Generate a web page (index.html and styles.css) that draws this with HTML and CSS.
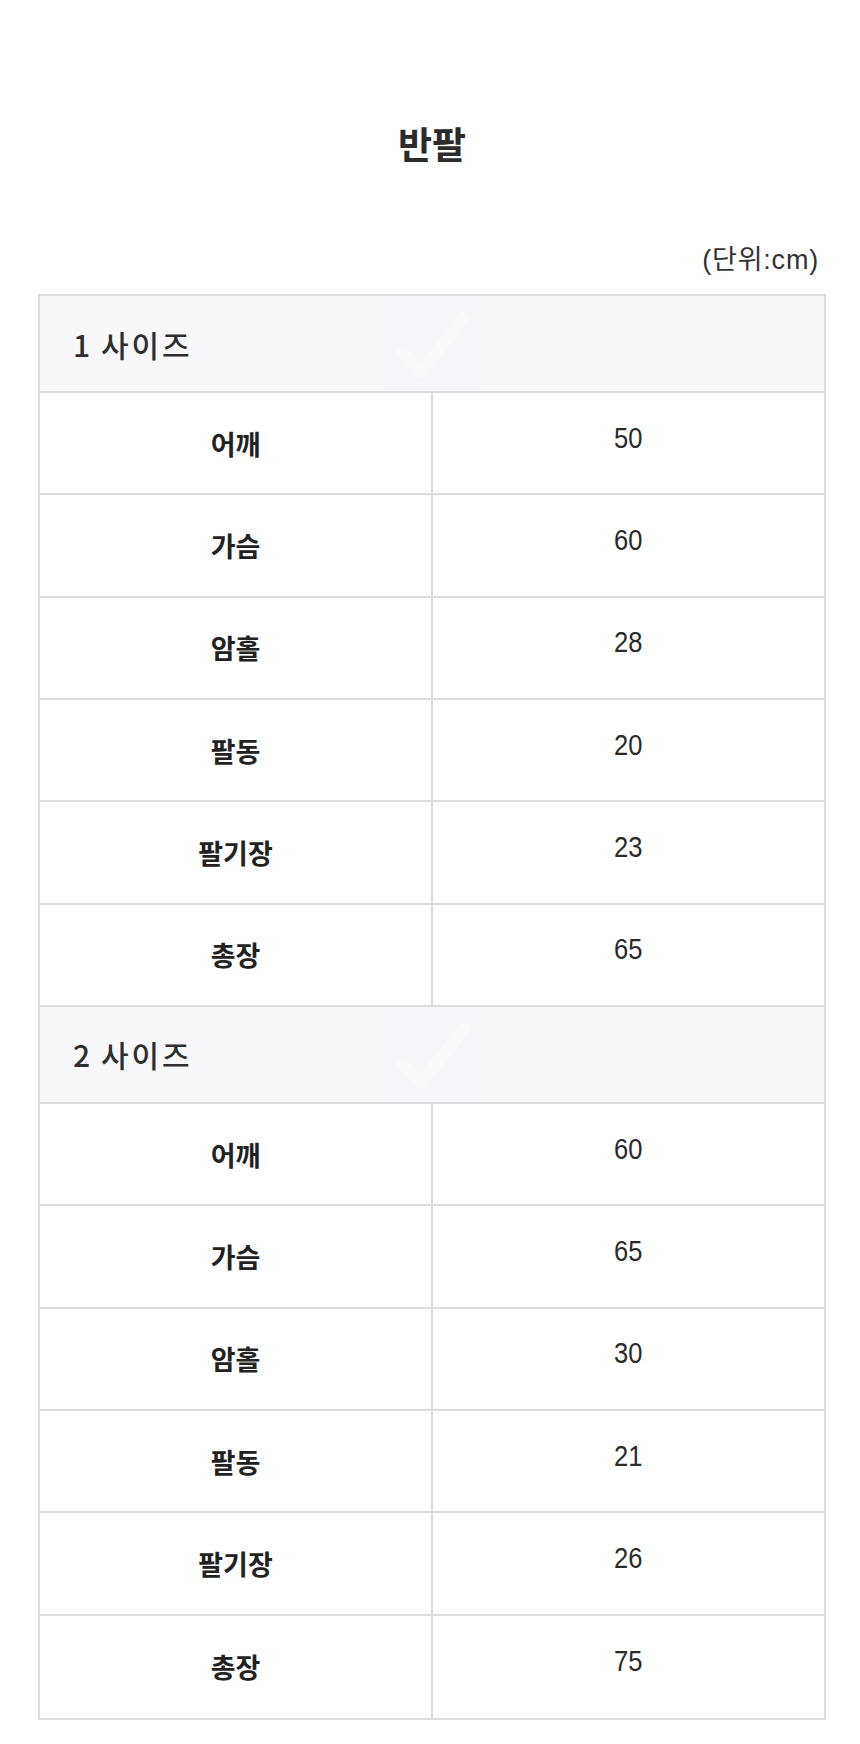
FILE: index.html
```html
<!DOCTYPE html>
<html lang="ko">
<head>
<meta charset="utf-8">
<title>반팔</title>
<link rel="stylesheet" href="styles.css">
</head>
<body>
<main class="page">
  <h1 class="title">반팔</h1>
  <p class="unit">(단위:cm)</p>
  <div class="size-table">
    <section class="size-section">
      <div class="size-head">
        <span class="head-text">1 사이즈</span>
        <span class="watermark" aria-hidden="true">
          <svg viewBox="0 0 97 97" width="97" height="97"><path d="M18 57 L37 76 L80 22" fill="none" stroke="#ffffff" stroke-width="12" stroke-linejoin="round" stroke-linecap="round" opacity="0.4"/></svg>
        </span>
      </div>
      <div class="row"><div class="cell label">어깨</div><div class="cell value"><span class="num">50</span></div></div>
      <div class="row"><div class="cell label">가슴</div><div class="cell value"><span class="num">60</span></div></div>
      <div class="row"><div class="cell label">암홀</div><div class="cell value"><span class="num">28</span></div></div>
      <div class="row"><div class="cell label">팔동</div><div class="cell value"><span class="num">20</span></div></div>
      <div class="row"><div class="cell label">팔기장</div><div class="cell value"><span class="num">23</span></div></div>
      <div class="row"><div class="cell label">총장</div><div class="cell value"><span class="num">65</span></div></div>
    </section>
    <section class="size-section">
      <div class="size-head">
        <span class="head-text">2 사이즈</span>
        <span class="watermark" aria-hidden="true">
          <svg viewBox="0 0 97 97" width="97" height="97"><path d="M18 57 L37 76 L80 22" fill="none" stroke="#ffffff" stroke-width="12" stroke-linejoin="round" stroke-linecap="round" opacity="0.4"/></svg>
        </span>
      </div>
      <div class="row"><div class="cell label">어깨</div><div class="cell value"><span class="num">60</span></div></div>
      <div class="row"><div class="cell label">가슴</div><div class="cell value"><span class="num">65</span></div></div>
      <div class="row"><div class="cell label">암홀</div><div class="cell value"><span class="num">30</span></div></div>
      <div class="row"><div class="cell label">팔동</div><div class="cell value"><span class="num">21</span></div></div>
      <div class="row"><div class="cell label">팔기장</div><div class="cell value"><span class="num">26</span></div></div>
      <div class="row"><div class="cell label">총장</div><div class="cell value"><span class="num">75</span></div></div>
    </section>
  </div>
</main>
</body>
</html>
```
FILE: styles.css
```css
* { box-sizing: border-box; }
html, body { margin: 0; padding: 0; background: #ffffff; }
body {
  font-family: "Noto Sans CJK KR", "Noto Sans", sans-serif;
  color: #333333;
}
.page {
  width: 860px;
  padding: 123px 34px 26px 38px;
}
.title {
  margin: 0;
  height: 40px;
  line-height: 40px;
  text-align: center;
  font-size: 37px;
  font-weight: 700;
  color: #2b2b2b;
}
.unit {
  margin: 84px 0 0 0;
  height: 26px;
  line-height: 26px;
  text-align: right;
  font-family: "Liberation Sans", "Noto Sans CJK KR", sans-serif;
  font-size: 27px;
  letter-spacing: 0.8px;
  color: #333333;
  padding-right: 7px;
}
.size-table {
  margin-top: 21px;
  border: 2px solid #dcdcdf;
}
.size-head {
  position: relative;
  height: 97px;
  display: flex;
  align-items: center;
  padding-left: 33px;
  background: #f8f8fb;
  border-bottom: 2px solid #dcdcdf;
}
.head-text {
  font-size: 30px;
  font-weight: 500;
  color: #2e2e2e;
  letter-spacing: 2.8px;
  word-spacing: -3px;
}
.watermark {
  position: absolute;
  left: 344px;
  top: 0;
  width: 97px;
  height: 95px;
  background: #f6f7fb;
}
.watermark svg { display: block; }
.row {
  display: grid;
  grid-template-columns: 393px 1fr;
  height: 102.33px;
  border-bottom: 2px solid #dcdcdf;
}
.size-section:last-child .row:last-child { border-bottom: none; }
.cell {
  display: flex;
  align-items: center;
  justify-content: center;
}
.label {
  font-size: 27px;
  font-weight: 700;
  color: #222222;
  border-right: 2px solid #dcdcdf;
}
.value {
  padding-bottom: 10px;
}
.num {
  display: inline-block;
  font-family: "Liberation Sans", Arial, sans-serif;
  font-size: 29px;
  color: #2a2a2a;
  transform: scaleX(0.88);
}
```
